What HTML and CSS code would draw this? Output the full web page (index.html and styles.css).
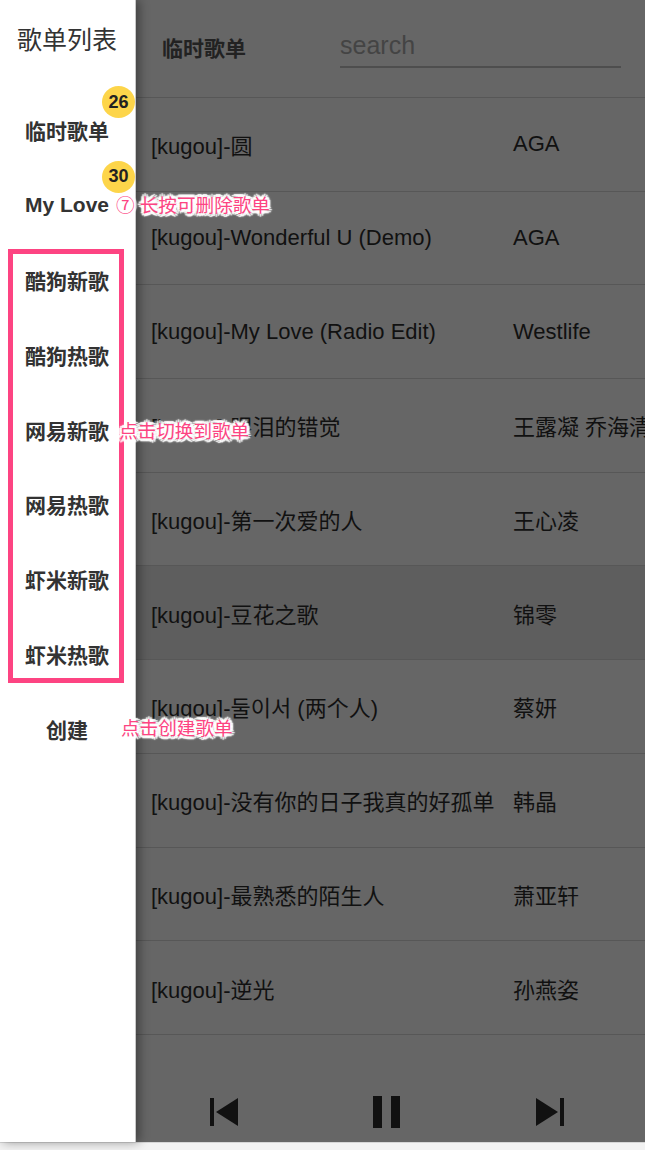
FILE: index.html
```html
<!DOCTYPE html>
<html lang="zh-CN">
<head>
<meta charset="utf-8">
<title>歌单列表</title>
<link rel="stylesheet" href="styles.css">
</head>
<body>
<div class="app">
  <aside class="sidebar">
    <div class="sidebar-title">歌单列表</div>
    <ul class="lists">
      <li class="list-item"><span>临时歌单</span><span class="badge">26</span></li>
      <li class="list-item"><span>My Love</span><span class="badge">30</span></li>
      <li class="list-item">酷狗新歌</li>
      <li class="list-item">酷狗热歌</li>
      <li class="list-item">网易新歌</li>
      <li class="list-item">网易热歌</li>
      <li class="list-item">虾米新歌</li>
      <li class="list-item">虾米热歌</li>
      <li class="list-item create">创建</li>
    </ul>
  </aside>
  <main class="main">
    <header class="main-header">
      <div class="main-title">临时歌单</div>
      <div class="search"><input type="text" placeholder="search"></div>
    </header>
    <div class="songs">
      <div class="song"><span class="name">[kugou]-圆</span><span class="artist">AGA</span></div>
      <div class="song"><span class="name">[kugou]-Wonderful U (Demo)</span><span class="artist">AGA</span></div>
      <div class="song"><span class="name">[kugou]-My Love (Radio Edit)</span><span class="artist">Westlife</span></div>
      <div class="song"><span class="name">[kugou]-眼泪的错觉</span><span class="artist">王露凝 乔海清</span></div>
      <div class="song"><span class="name">[kugou]-第一次爱的人</span><span class="artist">王心凌</span></div>
      <div class="song active"><span class="name">[kugou]-豆花之歌</span><span class="artist">锦零</span></div>
      <div class="song"><span class="name">[kugou]-둘이서 (两个人)</span><span class="artist">蔡妍</span></div>
      <div class="song"><span class="name">[kugou]-没有你的日子我真的好孤单</span><span class="artist">韩晶</span></div>
      <div class="song"><span class="name">[kugou]-最熟悉的陌生人</span><span class="artist">萧亚轩</span></div>
      <div class="song"><span class="name">[kugou]-逆光</span><span class="artist">孙燕姿</span></div>
    </div>
    <div class="controls">
      <span class="ctrl"><svg width="28" height="28" viewBox="0 0 28 28"><rect x="0" y="0" width="4" height="28"/><polygon points="28,0 6,14 28,28"/></svg></span>
      <span class="ctrl"><svg width="28" height="32" viewBox="0 0 28 32"><rect x="0" y="0" width="9" height="32"/><rect x="18" y="0" width="9" height="32"/></svg></span>
      <span class="ctrl"><svg width="28" height="28" viewBox="0 0 28 28"><polygon points="0,0 22,14 0,28"/><rect x="24" y="0" width="4" height="28"/></svg></span>
    </div>
  </main>
  <div class="frame"></div>
  <div class="note note-delete">⑦ 长按可删除歌单</div>
  <div class="note note-switch">点击切换到歌单</div>
  <div class="note note-create">点击创建歌单</div>
</div>
<div class="bottom-strip"></div>
</body>
</html>
```
FILE: styles.css
```css
* { box-sizing: border-box; }
html, body { margin: 0; padding: 0; }
body {
  background: #f2f2f2;
  font-family: "Liberation Sans", "Noto Sans CJK SC", "Noto Sans CJK KR", sans-serif;
  overflow: hidden;
}
.app {
  position: relative;
  display: flex;
  height: 1143px;
  border-bottom: 1px solid #d6d6d6;
}
.sidebar {
  position: relative;
  z-index: 2;
  width: 136px;
  flex: none;
  background: #fff;
  border-right: 1px solid #c8c8c8;
  box-shadow: 3px 0 10px rgba(0,0,0,0.4);
  overflow: hidden;
}
.sidebar-title {
  height: 76px;
  display: flex;
  align-items: center;
  justify-content: center;
  font-size: 25px;
  color: #333;
  padding-right: 1px;
}
.lists {
  list-style: none;
  margin: 0;
  padding: 17px 0 0;
}
.list-item {
  position: relative;
  height: 74.8px;
  display: flex;
  align-items: center;
  justify-content: center;
  font-size: 21px;
  font-weight: bold;
  color: #333;
  padding-right: 1px;
}
.badge {
  position: absolute;
  top: -7px;
  left: 102px;
  width: 33px;
  height: 32px;
  border-radius: 50%;
  background: #fdd54a;
  color: #222;
  font-size: 18px;
  font-weight: bold;
  display: flex;
  align-items: center;
  justify-content: center;
}
.main {
  flex: 1;
  display: flex;
  flex-direction: column;
  background: #666;
  min-width: 0;
}
.main-header {
  height: 98px;
  flex: none;
  display: flex;
  align-items: center;
  border-bottom: 1px solid #575757;
  padding-left: 26px;
}
.main-title {
  font-size: 21px;
  font-weight: bold;
  color: #222;
  width: 178px;
  margin-top: -4px;
}
.search {
  width: 281px;
  margin-top: 2px;
}
.search input {
  width: 100%;
  border: 0;
  border-bottom: 2px solid #4e4e4e;
  background: transparent;
  font-family: inherit;
  font-size: 25px;
  padding: 0 0 6px;
  outline: none;
  color: #222;
}
.search input::placeholder { color: #444; }
.songs { flex: none; }
.song {
  height: 93.7px;
  display: flex;
  align-items: center;
  border-bottom: 1px solid #575757;
  padding-left: 15px;
  font-size: 22px;
  color: #111;
  white-space: nowrap;
  overflow: hidden;
}
.song.active { background: #5e5e5e; }
.song .name { width: 362px; flex: none; overflow: hidden; }
.song .artist { flex: none; }
.controls {
  flex: 1;
  display: grid;
  grid-template-columns: repeat(3, 163px);
  align-content: end;
  padding: 0 0 14px 6px;
}
.ctrl {
  display: flex;
  justify-content: center;
  align-items: center;
  height: 32px;
}
.ctrl svg { fill: #111; display: block; }
.frame {
  position: absolute;
  z-index: 4;
  left: 8px;
  top: 249px;
  width: 116px;
  height: 434px;
  border: 5px solid #fd4482;
}
.note {
  position: absolute;
  z-index: 5;
  font-size: 18.6px;
  line-height: 24px;
  color: #fd4482;
  white-space: nowrap;
  text-shadow:
    3px 0 1px #fff, -3px 0 1px #fff, 0 3px 1px #fff, 0 -3px 1px #fff,
    2px 2px 1px #fff, -2px -2px 1px #fff, 2px -2px 1px #fff, -2px 2px 1px #fff,
    0 0 4px #fff, 0 0 4px #fff;
}
.note-delete { left: 116px; top: 194px; }
.note-switch { left: 119px; top: 420px; }
.note-create { left: 121px; top: 717px; }
.bottom-strip { height: 7px; background: #f2f2f2; }
```
